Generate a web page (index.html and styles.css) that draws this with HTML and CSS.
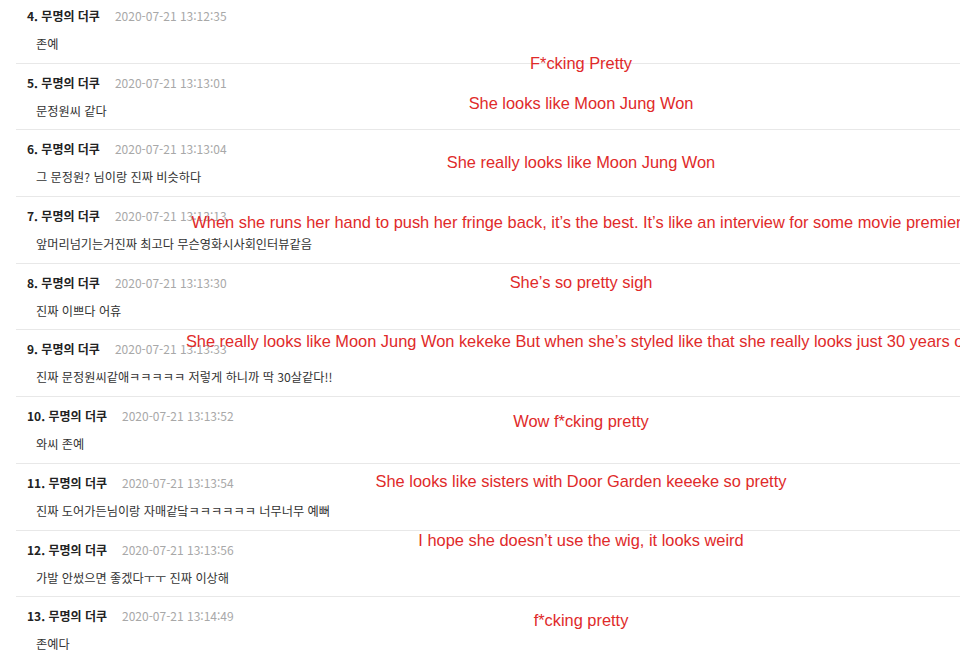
FILE: index.html
```html
<!DOCTYPE html>
<html lang="ko">
<head>
<meta charset="utf-8">
<title>댓글</title>
<link rel="stylesheet" href="styles.css">
</head>
<body>
<div class="page">
  <ul class="comments">
    <li class="comment"><div class="head"><span class="name">4. 무명의 더쿠</span><span class="date">2020-07-21 13:12:35</span></div><p class="text">존예</p></li>
    <li class="comment"><div class="head"><span class="name">5. 무명의 더쿠</span><span class="date">2020-07-21 13:13:01</span></div><p class="text">문정원씨 같다</p></li>
    <li class="comment"><div class="head"><span class="name">6. 무명의 더쿠</span><span class="date">2020-07-21 13:13:04</span></div><p class="text">그 문정원? 님이랑 진짜 비슷하다</p></li>
    <li class="comment"><div class="head"><span class="name">7. 무명의 더쿠</span><span class="date">2020-07-21 13:13:13</span></div><p class="text">앞머리넘기는거진짜 최고다 무슨영화시사회인터뷰같음</p></li>
    <li class="comment"><div class="head"><span class="name">8. 무명의 더쿠</span><span class="date">2020-07-21 13:13:30</span></div><p class="text">진짜 이쁘다 어휴</p></li>
    <li class="comment"><div class="head"><span class="name">9. 무명의 더쿠</span><span class="date">2020-07-21 13:13:33</span></div><p class="text">진짜 문정원씨같애ㅋㅋㅋㅋㅋ 저렇게 하니까 딱 30살같다!!</p></li>
    <li class="comment"><div class="head"><span class="name">10. 무명의 더쿠</span><span class="date">2020-07-21 13:13:52</span></div><p class="text">와씨 존예</p></li>
    <li class="comment"><div class="head"><span class="name">11. 무명의 더쿠</span><span class="date">2020-07-21 13:13:54</span></div><p class="text">진짜 도어가든님이랑 자매같닼ㅋㅋㅋㅋㅋㅋ 너무너무 예뻐</p></li>
    <li class="comment"><div class="head"><span class="name">12. 무명의 더쿠</span><span class="date">2020-07-21 13:13:56</span></div><p class="text">가발 안썼으면 좋겠다ㅜㅜ 진짜 이상해</p></li>
    <li class="comment"><div class="head"><span class="name">13. 무명의 더쿠</span><span class="date">2020-07-21 13:14:49</span></div><p class="text">존예다</p></li>
  </ul>
  <div class="notes">
    <span class="note n1">F*cking Pretty</span>
    <span class="note n2">She looks like Moon Jung Won</span>
    <span class="note n3">She really looks like Moon Jung Won</span>
    <span class="note n4">When she runs her hand to push her fringe back, it’s the best. It’s like an interview for some movie premiere</span>
    <span class="note n5">She’s so pretty sigh</span>
    <span class="note n6">She really looks like Moon Jung Won kekeke But when she’s styled like that she really looks just 30 years old</span>
    <span class="note n7">Wow f*cking pretty</span>
    <span class="note n8">She looks like sisters with Door Garden keeeke so pretty</span>
    <span class="note n9">I hope she doesn’t use the wig, it looks weird</span>
    <span class="note n10">f*cking pretty</span>
  </div>
</div>
</body>
</html>
```
FILE: styles.css
```css
html, body {
  margin: 0;
  padding: 0;
  background: #ffffff;
  overflow: hidden;
}

.page {
  position: relative;
  width: 960px;
  height: 657px;
  overflow: hidden;
  font-family: "Noto Sans CJK KR", "Noto Sans", sans-serif;
}

.comments {
  list-style: none;
  margin: -3px 0 0 16px;
  padding: 0;
}

.comment {
  padding: 10px 0 9.7px 11px;
  border-bottom: 1px solid #e8e8e8;
}

.head {
  display: flex;
  align-items: baseline;
  height: 18px;
  line-height: 18px;
}

.name {
  font-size: 12px;
  font-weight: 700;
  color: #222222;
}

.date {
  margin-left: 15px;
  font-size: 12px;
  color: #a8a8a8;
}

.text {
  margin: 10px 0 0 9px;
  height: 18px;
  line-height: 18px;
  font-size: 12.2px;
  color: #333333;
}

.notes {
  position: absolute;
  inset: 0;
  pointer-events: none;
}

.note {
  position: absolute;
  left: 581px;
  transform: translateX(-50%);
  white-space: nowrap;
  font-family: "Liberation Sans", Arial, sans-serif;
  font-size: 16.4px;
  line-height: 20px;
  color: #e02a2a;
}

.n1 { top: 53px; }
.n2 { top: 93px; }
.n3 { top: 152px; }
.n4 { top: 212px; }
.n5 { top: 272px; }
.n6 { top: 331px; }
.n7 { top: 411px; }
.n8 { top: 471px; }
.n9 { top: 530px; }
.n10 { top: 610px; }
```
